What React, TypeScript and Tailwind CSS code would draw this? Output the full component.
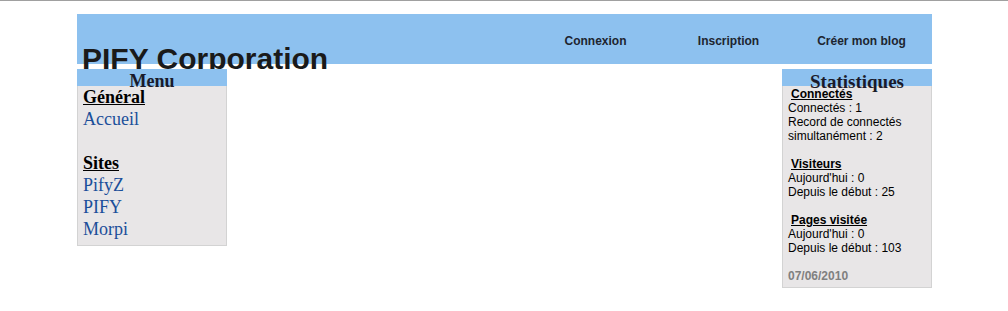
import React from "react";

const serif = { fontFamily: '"Liberation Serif", serif' };

export default function App() {
  return (
    <div className="min-h-[311px] w-full border-t border-[#a0a0a0] bg-white" style={{ fontFamily: '"Liberation Sans", Arial, sans-serif' }}>
      <div className="ml-[77px] w-[855px] pt-[13px]">
        <header className="flex h-[50px] items-start justify-between bg-[#8dc1ef]">
          <h1 className="ml-[5px] mt-[30px] whitespace-nowrap text-[30px] font-bold leading-none text-[#1a1a1a]">PIFY Corporation</h1>
          <nav className="mr-[4px] mt-[20px] flex text-[12px] font-bold leading-[14px] text-[#1d2530]">
            <span className="w-[133px] text-center">Connexion</span>
            <span className="w-[133px] text-center">Inscription</span>
            <span className="w-[133px] text-center">Créer mon blog</span>
          </nav>
        </header>
        <div className="mt-[5px] flex items-start justify-between">
          <aside className="w-[150px]">
            <div className="h-[17px] bg-[#8dc1ef] text-center text-[18px] font-bold leading-[17px] text-[#1a1a2a]" style={serif}>
              <span className="relative top-[4px]">Menu</span>
            </div>
            <div className="border border-t-0 border-[#d3d3d3] bg-[#e8e6e7] pb-[5px] pl-[5px] text-[18px] leading-[22px]" style={serif}>
              <div className="font-bold text-black underline">Général</div>
              <div className="text-[#1b4f9a]">Accueil</div>
              <div className="h-[22px]" />
              <div className="font-bold text-black underline">Sites</div>
              <div className="text-[#1b4f9a]">PifyZ</div>
              <div className="text-[#1b4f9a]">PIFY</div>
              <div className="text-[#1b4f9a]">Morpi</div>
            </div>
          </aside>
          <aside className="w-[150px]">
            <div className="h-[17px] bg-[#8dc1ef] text-center text-[19px] font-bold leading-[17px] text-[#1a1a2a]" style={serif}>
              <span className="relative top-[4px]">Statistiques</span>
            </div>
            <div className="border border-t-0 border-[#d3d3d3] bg-[#e8e6e7] pb-[4px] pl-[5px] pt-[1px] text-[12px] leading-[14px] text-black">
              <div className="ml-[3px] font-bold underline">Connectés</div>
              <div>Connectés : 1</div>
              <div>Record de connectés simultanément : 2</div>
              <div className="h-[14px]" />
              <div className="ml-[3px] font-bold underline">Visiteurs</div>
              <div>Aujourd'hui : 0</div>
              <div>Depuis le début : 25</div>
              <div className="h-[14px]" />
              <div className="ml-[3px] font-bold underline">Pages visitée</div>
              <div>Aujourd'hui : 0</div>
              <div>Depuis le début : 103</div>
              <div className="h-[14px]" />
              <div className="font-bold text-[#808080]">07/06/2010</div>
            </div>
          </aside>
        </div>
      </div>
    </div>
  );
}
